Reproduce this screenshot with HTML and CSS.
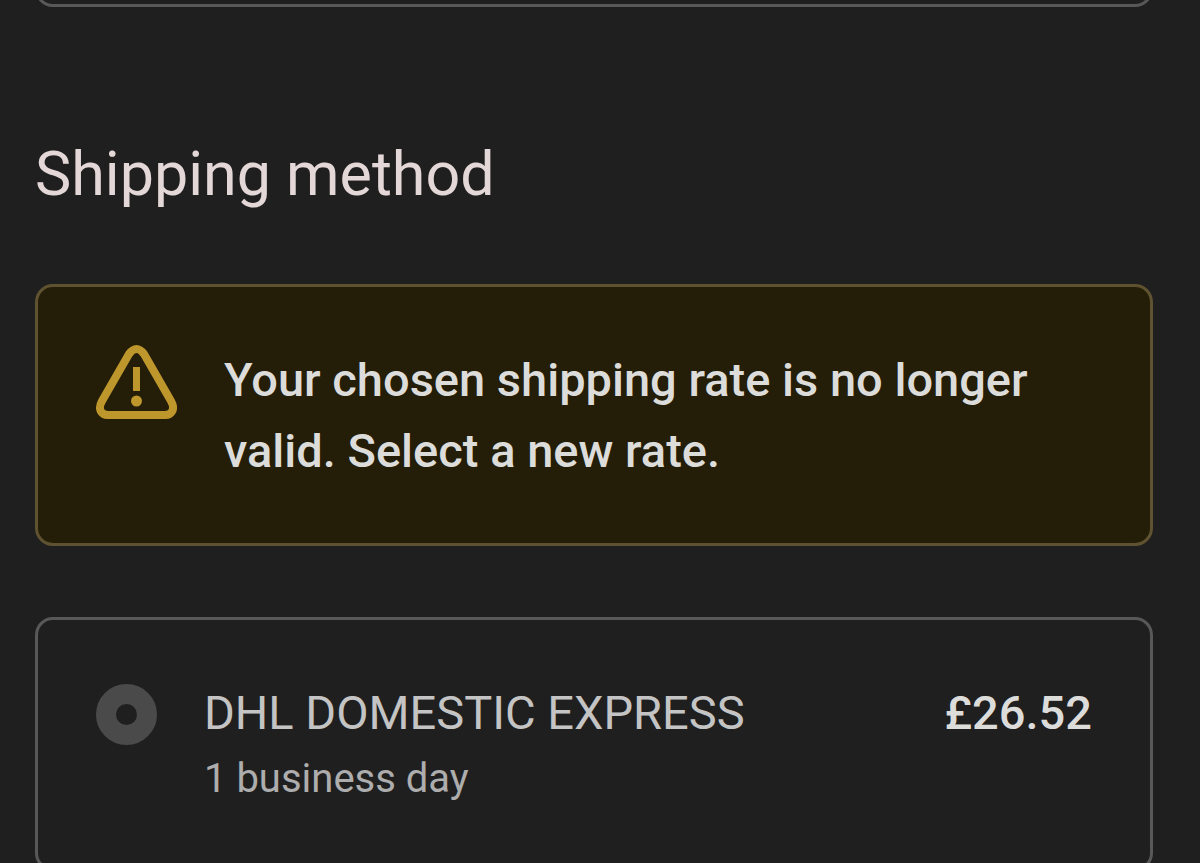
FILE: index.html
```html
<!DOCTYPE html>
<html lang="en">
<head>
    <meta charset="UTF-8">
    <meta name="viewport" content="width=device-width, initial-scale=1.0">
    <title>Shipping method</title>
    <link rel="stylesheet" href="styles.css">
</head>
<body>
    <main class="checkout">
        <!-- End of the previous section -->
        <div class="previous-box"></div>

        <section class="shipping">
            <h1>Shipping method</h1>

            <div class="warning" role="alert">
                <svg class="warning-icon" viewBox="0 0 82 76" aria-hidden="true">
                    <path d="M34 10 Q41.500 0 49 10 L76 57 C80.500 65 77 71 70 71 H13 C6 71 2.500 65 7 57 Z" fill="none" stroke="#bd962c" stroke-width="8" stroke-linejoin="round"/>
                    <path d="M41.500 23 V47" stroke="#bd962c" stroke-width="7"/>
                    <circle cx="41.500" cy="57" r="5.500" fill="#bd962c"/>
                </svg>
                <p>Your chosen shipping rate is no longer valid. Select a new rate.</p>
            </div>

            <div class="rates">
                <input type="radio" id="dhl" name="rate" checked>
                <label class="rate" for="dhl">
                    <span class="rate-name">DHL DOMESTIC EXPRESS</span>
                    <span class="rate-time">1 business day</span>
                </label>
                <span class="price">£26.52</span>
            </div>
        </section>
    </main>
</body>
</html>
```

FILE: styles.css
```css
* {
    box-sizing: border-box;
}
body {
    margin: 0;
    background-color: #201f1f;
    color: #dcdcda;
    font-family: Roboto, Arial, sans-serif;
    overflow: hidden;
}
.checkout {
    display: flow-root;
    padding: 0 47px 0 35px;
}
.previous-box {
    height: 40px;
    margin-top: -33px;
    border: 3px solid #585858;
    border-radius: 18px;
}
h1 {
    margin: 0;
    padding: 130px 0 72px;
    color: #e3d8d7;
    font-size: 61px;
    font-weight: 400;
    line-height: 74px;
}
.warning {
    display: flex;
    align-items: flex-start;
    gap: 47px;
    margin-top: 1px;
    padding: 57px;
    border: 3px solid #5f5230;
    border-radius: 18px;
    background-color: #241e08;
}
.warning-icon {
    flex: none;
    width: 82px;
    height: 76px;
}
.warning p {
    margin: 0;
    font-size: 47px;
    font-weight: 500;
    line-height: 71px;
}
.rates {
    display: flex;
    align-items: flex-start;
    margin-top: 71px;
    padding: 64px 58px 52px;
    border: 3px solid #585858;
    border-radius: 18px;
}
.rates input {
    appearance: none;
    flex: none;
    width: 61px;
    height: 61px;
    margin: 0 47px 0 0;
    border: 20px solid #4a4a4a;
    border-radius: 50%;
}
.rate {
    flex: 1;
}
.rate-name,
.rate-time {
    display: block;
}
.rate-name {
    color: #c4c4c4;
    font-size: 47px;
    line-height: 58px;
}
.rate-time {
    color: #adadad;
    font-size: 40px;
    line-height: 74px;
}
.price {
    font-size: 47px;
    font-weight: 500;
    line-height: 58px;
}
```
